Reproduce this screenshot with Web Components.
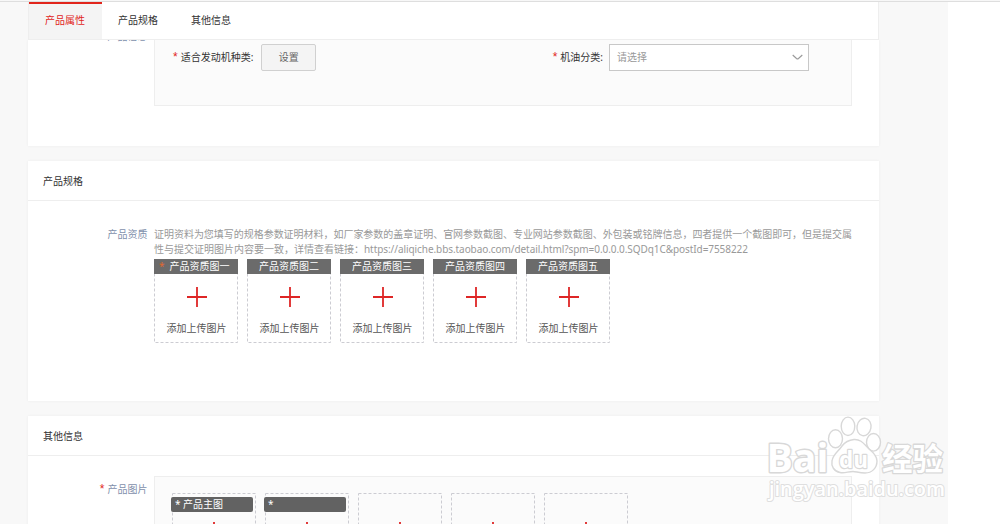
<!DOCTYPE html>
<html lang="zh-CN">
<head>
<meta charset="utf-8">
<title>产品发布</title>
<style>
html,body{margin:0;height:524px;overflow:hidden;background:#fff}
body{font:10px/15px "Noto Sans","Noto Sans CJK SC",sans-serif;color:#333}
</style>
</head>
<body>
<publish-page></publish-page>
<script>
const define = (name, html, setup) => {
  const tpl = document.createElement('template');
  tpl.innerHTML = html;
  customElements.define(name, class extends HTMLElement {
    constructor() {
      super();
      this.attachShadow({ mode: 'open' }).append(tpl.content.cloneNode(true));
    }
    connectedCallback() { if (setup) setup(this, this.shadowRoot); }
  });
};

define('nav-tab', `<style>
:host{display:block;box-sizing:border-box;width:73px;height:37px;text-align:center;line-height:37px;color:#333;padding-right:1px}
:host([active]){background:#f4f4f4;color:#e1251b;border-top:2px solid #e1251b;line-height:33px}
</style><slot></slot>`);

define('tab-bar', `<style>
:host{display:flex;box-sizing:border-box;height:38px;background:#fff;border:1px solid #eee;border-top:0;width:851px}
</style><slot></slot>`);

define('form-panel', `<style>
:host{display:flex;flex-direction:column;box-sizing:border-box;width:851px;background:#fff;box-shadow:0 0 3px rgba(0,0,0,.05)}
header{box-sizing:border-box;height:40px;flex:none;border-bottom:1px solid #eee;padding-left:15px;line-height:41px;color:#333}
:host(:not([heading])) header{display:none}
</style><header></header><slot></slot>`,
(el, root) => { root.querySelector('header').textContent = el.getAttribute('heading') || ''; });

define('form-row', `<style>
:host{display:grid;grid-template-columns:119.5px 698px;column-gap:6.5px}
.label{text-align:right;color:#7f90ab}
</style><div class="label"><slot name="label"></slot></div><div><slot></slot></div>`);

define('req-mark', `<style>:host{color:#e1251b;margin-right:3px;font-family:"Liberation Sans",sans-serif;font-size:12px}</style>*`);

define('ui-button', `<style>
:host{display:block;box-sizing:border-box;width:55px;height:27px;border:1px solid #d0d0d0;border-radius:2px;background:#f4f4f4;color:#666;text-align:center;line-height:25px}
</style><slot></slot>`);

define('ui-select', `<style>
:host{display:flex;box-sizing:border-box;width:200px;height:27px;border:1px solid #c8c8c8;background:#fff;color:#999;line-height:27px;padding:0 5px 0 7px;justify-content:space-between;align-items:center}
svg{display:block}
</style><span><slot></slot></span><svg width="11" height="7" viewBox="0 0 11 7"><path d="M.7 1 4.500 4.500Q5.500 5.300 6.500 4.500L10.300 1" fill="none" stroke="#999" stroke-width="1.1"/></svg>`);

define('upload-tile', `<style>
:host{display:flex;flex-direction:column;align-items:center;position:relative;box-sizing:border-box;width:84px;height:84px}
.frame{position:absolute;left:0;top:0}
.cap{box-sizing:border-box;width:84px;height:15px;background:#6b6b6b;color:#fff;text-align:center;line-height:15px;white-space:nowrap;position:relative}
.plus{display:block;margin-top:13px;position:relative;left:.5px}
.txt{margin-top:13px;color:#555;position:relative;line-height:16px;padding-left:1px}
.cap i{font-style:normal;color:#e0682f;margin-right:5px}
:host(:not([star])) i{display:none}
:host([star]) .cap{text-align:left;text-indent:5px}
:host([pill]) .cap,:host([blank]) .cap{margin:4px 0 0 -4px;width:82px;border-radius:2px;background:#626262;text-align:left;text-indent:4px}
:host([blank]) .cap{visibility:hidden}
:host([pill]) .plus,:host([blank]) .plus{margin-top:10px;left:-.5px}
:host([pill]) .txt,:host([blank]) .txt{display:none}
</style>
<svg class="frame" width="84" height="84"><rect x=".5" y=".5" width="83" height="83" fill="none" stroke="#ccccd2" stroke-dasharray="3 2"/></svg>
<div class="cap"><i>*</i><slot></slot></div>
<svg class="plus" width="20" height="20" viewBox="0 0 20 20"><path d="M0 10H20M10 0V20" stroke="#de2626" stroke-width="1.8"/></svg>
<div class="txt">添加上传图片</div>`);

define('tile-row', `<style>:host{display:flex;gap:9px}</style><slot></slot>`);

define('brand-mark', `<style>
:host{position:absolute;left:760px;top:410px;width:190px;height:95px;pointer-events:none}
svg{display:block;overflow:visible}
text{paint-order:stroke;stroke-linejoin:round}
</style>
<svg width="190" height="95" viewBox="0 0 190 95">
<g fill="#fff" fill-opacity=".85" stroke="#d8d8d8" stroke-width="1.4">
<text x="6.500" y="61.500" font-family="Open Sans" font-weight="700" font-size="39" textLength="62" lengthAdjust="spacingAndGlyphs" stroke-width="2.8" fill-opacity="1">Bai</text>
<g transform="translate(0 -10)">
<ellipse cx="75.5" cy="38.7" rx="7" ry="9"/><ellipse cx="88" cy="26.3" rx="6.8" ry="9.2"/><ellipse cx="104" cy="27" rx="7" ry="8.8" transform="rotate(10 104 27)"/><ellipse cx="113.5" cy="42.300" rx="7" ry="8.8"/>
<path d="M94 39.500C101 39 104 44 109 49 114 53 117 56 117 61 117 68 112 73 105 73 99 73 96 71.500 93 71.500 88 71.500 85 73.500 80 72.500 74 71.500 71 66 72 61 73 54 78 52 82 46 85 42 89 40 94 39.500Z"/>
</g>
<g fill-opacity="1">
<text x="79" y="57.500" font-family="Open Sans" font-weight="700" font-size="24" textLength="29" lengthAdjust="spacingAndGlyphs" stroke-width="2.400">du</text>
<text x="122" y="60" font-family="Noto Sans CJK SC" font-weight="700" font-size="31" textLength="61" lengthAdjust="spacingAndGlyphs" stroke-width="2.600">经验</text>
<text x="9" y="86" font-family="Open Sans" font-weight="600" font-size="19" textLength="176" lengthAdjust="spacingAndGlyphs" stroke-width="2" stroke="#dfdfdf">jingyan.baidu.com</text>
</g></g></svg>`);

define('publish-page', `<style>
:host{display:block;width:1000px;height:524px;overflow:hidden;position:relative}
.top{box-sizing:border-box;height:2px;background:#f7f7f7;border-bottom:1px solid #dedede}
.canvas{box-sizing:border-box;width:948px;height:522px;background:#f8f8f8;padding-left:28px;overflow:hidden;display:flex;flex-direction:column}
form-panel{flex:none}
tab-bar{flex:none;position:relative;z-index:1}
.first{height:106px;margin-bottom:15px}
.second{height:240px;margin-bottom:15px}
.third{height:140px}
.first form-row{margin-top:-11px}
.box{box-sizing:border-box;border:1px solid #eee;background:#fbfbfb;width:698px}
.props{height:77px;display:flex;align-items:flex-start;padding:14px 42px 0 18px}
.props span{line-height:27px;margin-right:6px;white-space:nowrap}
.props ui-button{margin-left:2px}
.push{margin-left:auto}
.second form-row{margin-top:26px}
.tip{color:#999;white-space:nowrap;height:32px;line-height:15px}
.tip div{display:block;width:max-content}
.l1{letter-spacing:-.03px}
.url{letter-spacing:-.07px}
.third form-row{margin-top:20px}
.pics{height:120px;padding:16px 0 0 17px}
.lab{display:block;padding-top:6px}
</style>
<div class="top"></div>
<div class="canvas">
<tab-bar><nav-tab active>产品属性</nav-tab><nav-tab>产品规格</nav-tab><nav-tab>其他信息</nav-tab></tab-bar>
<form-panel class="first"><form-row><span slot="label">产品信息</span>
<div class="box props"><span><req-mark></req-mark>适合发动机种类:</span><ui-button>设置</ui-button><span class="push"><req-mark></req-mark>机油分类:</span><ui-select>请选择</ui-select></div></form-row></form-panel>
<form-panel class="second" heading="产品规格"><form-row><span slot="label">产品资质</span>
<div class="tip"><div class="l1">证明资料为您填写的规格参数证明材料，如厂家参数的盖章证明、官网参数截图、专业网站参数截图、外包装或铭牌信息，四者提供一个截图即可，但是提交属</div><div class="l2">性与提交证明图片内容要一致，详情查看链接：<span class="url">https://aliqiche.bbs.taobao.com/detail.html?spm=0.0.0.0.SQDq1C&amp;postId=7558222</span></div></div>
<tile-row><upload-tile star>产品资质图一</upload-tile><upload-tile>产品资质图二</upload-tile><upload-tile>产品资质图三</upload-tile><upload-tile>产品资质图四</upload-tile><upload-tile>产品资质图五</upload-tile></tile-row></form-row></form-panel>
<form-panel class="third" heading="其他信息"><form-row><span slot="label" class="lab"><req-mark></req-mark>产品图片</span>
<div class="box pics"><tile-row><upload-tile pill>* 产品主图</upload-tile><upload-tile pill>*</upload-tile><upload-tile blank></upload-tile><upload-tile blank></upload-tile><upload-tile blank></upload-tile></tile-row></div></form-row></form-panel>
</div>
<brand-mark></brand-mark>`);
</script>
</body>
</html>
